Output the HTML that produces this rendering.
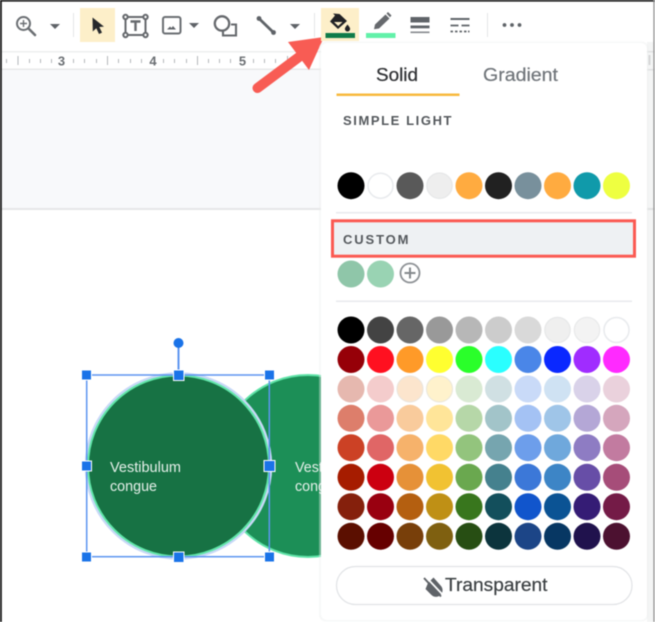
<!DOCTYPE html>
<html><head><meta charset="utf-8">
<style>
html,body{margin:0;padding:0;background:#fff}
svg{display:block;filter:blur(0.5px)}
text{font-family:"Liberation Sans",Arial,sans-serif}
</style></head>
<body>
<svg width="655" height="622" viewBox="0 0 655 622" xmlns="http://www.w3.org/2000/svg">
<rect width="655" height="622" fill="#fff"/>
<!-- canvas -->
<rect x="0" y="70" width="655" height="138" fill="#f8f9fb"/>
<rect x="0" y="208" width="655" height="2" fill="#e6e7e8"/>
<rect x="0" y="51" width="655" height="1.5" fill="#eeefef"/>
<rect x="0" y="68.5" width="655" height="1.5" fill="#e8e9ea"/>
<!-- ruler -->
<g fill="#b4b7ba">
<rect x="17.5" y="56" width="1" height="9"/><rect x="107" y="56" width="1" height="9"/><rect x="197" y="56" width="1" height="9"/><rect x="287" y="56" width="1" height="9"/>
<rect x="6" y="59" width="1" height="4"/><rect x="29" y="59" width="1" height="4"/><rect x="40" y="59" width="1" height="4"/><rect x="51" y="59" width="1" height="4"/>
<rect x="73" y="59" width="1" height="4"/><rect x="84" y="59" width="1" height="4"/><rect x="96" y="59" width="1" height="4"/>
<rect x="118" y="59" width="1" height="4"/><rect x="130" y="59" width="1" height="4"/><rect x="141" y="59" width="1" height="4"/>
<rect x="163" y="59" width="1" height="4"/><rect x="174" y="59" width="1" height="4"/><rect x="186" y="59" width="1" height="4"/>
<rect x="208" y="59" width="1" height="4"/><rect x="219" y="59" width="1" height="4"/><rect x="230" y="59" width="1" height="4"/>
<rect x="253" y="59" width="1" height="4"/><rect x="264" y="59" width="1" height="4"/><rect x="275" y="59" width="1" height="4"/>
</g>
<g font-size="13" fill="#6b6f73" text-anchor="middle" font-weight="bold">
<text x="61.5" y="65.5">3</text><text x="153" y="65.5">4</text><text x="242.5" y="65.5">5</text>
</g>
<!-- toolbar -->
<g fill="none" stroke="#6b6f73" stroke-width="2">
<circle cx="23.5" cy="23.5" r="6.5"/>
<path d="M28.5 28.5L35 35" stroke-width="2.6" stroke-linecap="round"/>
<path d="M20 23.5h7M23.5 20v7" stroke-width="1.4"/>
</g>
<path d="M50 24h10l-5 5z" fill="#5f6368"/>
<rect x="73" y="13" width="1" height="24" fill="#e3e5e7"/>
<rect x="80" y="8" width="35" height="34" fill="#fdefc9"/>
<path d="M92.5 17.5L92.8 31.5L96.3 28.2L99 34L102 32.6L99.3 27L104 26.6Z" fill="#26282b"/>
<!-- text box -->
<g fill="none" stroke="#66696d" stroke-width="2">
<rect x="125.5" y="17" width="20" height="18"/>
<circle cx="125.5" cy="17" r="2.2" fill="#fff"/><circle cx="145.5" cy="17" r="2.2" fill="#fff"/>
<circle cx="125.5" cy="35" r="2.2" fill="#fff"/><circle cx="145.5" cy="35" r="2.2" fill="#fff"/>
<path d="M130.5 21.5h10M135.5 21.5v9.5" stroke-width="2.4"/>
</g>
<!-- image -->
<rect x="163" y="17" width="17.5" height="16.5" rx="2" fill="none" stroke="#6b6f73" stroke-width="2"/>
<path d="M167 29.5l3-3 1.5 1.5 1.5-2 3 3.5z" fill="#5f6368"/>
<path d="M189 23h10l-5 5z" fill="#5f6368"/>
<!-- shape -->
<circle cx="222" cy="23.5" r="7.2" fill="none" stroke="#66696d" stroke-width="2.3"/>
<path d="M231 24.5h5v11h-13v-4" fill="none" stroke="#66696d" stroke-width="2.1"/>
<!-- line -->
<path d="M259 18.5L273.5 32.5" stroke="#5f6368" stroke-width="2.8"/>
<circle cx="259" cy="18.5" r="2.4" fill="#5f6368"/><circle cx="273.5" cy="32.5" r="2.4" fill="#5f6368"/>
<path d="M290 24h10l-5 5z" fill="#5f6368"/>
<rect x="314" y="13" width="1" height="24" fill="#e3e5e7"/>
<!-- arrow -->
<path d="M257.5 88L303 54" stroke="#f85c54" stroke-width="10" stroke-linecap="round" fill="none"/>
<path d="M288 42L324 37L309 70Z" fill="#f85c54"/>
<!-- fill highlight -->
<rect x="321" y="8" width="38" height="33" fill="#fdefc9"/>
<path d="M333 13.5L335 15.5L330 21.5L338 29L347 21L339.5 14Z" fill="#202124"/>
<path d="M334 22L342.5 22L338.2 26Z" fill="#fdefc9"/>
<path d="M347.5 24.5c1.6 2 2.6 3.2 2.6 4.4a2.6 2.6 0 0 1-5.2 0c0-1.2 1-2.4 2.6-4.4z" fill="#202124"/>
<rect x="325.5" y="33" width="29.5" height="5" fill="#0f7b49"/>
<!-- pencil -->
<path d="M374 29.2L375 24.5L385.5 14.5L389.5 18.5L379 28.5Z" fill="#66696d"/>
<path d="M386.5 13.5L388 12L391.5 15.5L390 17.2Z" fill="#66696d"/>
<rect x="366" y="33" width="29.5" height="5" fill="#62f1a9"/>
<!-- border weight -->
<rect x="410.5" y="17" width="19" height="5.5" fill="#5f6368"/>
<rect x="410.5" y="25.5" width="19" height="2.8" fill="#5f6368"/>
<rect x="410.5" y="31.5" width="19" height="1.6" fill="#85898d"/>
<!-- border dash -->
<rect x="450.5" y="18" width="19" height="2" fill="#5f6368"/>
<path d="M450.5 25.5h8M461.5 25.5h8" stroke="#5f6368" stroke-width="1.8"/>
<path d="M450.5 31.5h2.5M455 31.5h2.5M459.5 31.5h2.5M464 31.5h2.5M468 31.5h1.5" stroke="#5f6368" stroke-width="1.8"/>
<rect x="487" y="13" width="1" height="24" fill="#e3e5e7"/>
<circle cx="504.5" cy="25" r="1.9" fill="#5f6368"/><circle cx="512" cy="25" r="1.9" fill="#5f6368"/><circle cx="519.5" cy="25" r="1.9" fill="#5f6368"/>
<!-- shapes -->
<circle cx="308" cy="466" r="91" fill="#1c8f57" stroke="#60e3a8" stroke-width="2"/>
<text x="295" y="472" font-size="14.3" fill="#e6f0ea">Vest</text>
<text x="295" y="491" font-size="14.3" fill="#e6f0ea">congue</text>
<circle cx="178.5" cy="466" r="92.5" fill="none" stroke="#c8d8f7" stroke-width="2.5"/>
<circle cx="178.5" cy="466" r="90.5" fill="#177244" stroke="#62e6aa" stroke-width="2"/>
<text x="110" y="472" font-size="14.3" fill="#e6f0ea" textLength="71" lengthAdjust="spacingAndGlyphs">Vestibulum</text>
<text x="110" y="491" font-size="14.3" fill="#e6f0ea" textLength="47" lengthAdjust="spacingAndGlyphs">congue</text>
<rect x="86.7" y="375" width="182.6" height="181.7" fill="none" stroke="#5d95f0" stroke-width="1.5"/>
<path d="M178.5 343V375" stroke="#5d95f0" stroke-width="2"/>
<circle cx="178.5" cy="343" r="5" fill="#1a73e8"/>
<g fill="#1a73e8" stroke="#fff" stroke-width="1">
<rect x="81.5" y="370" width="10" height="10"/><rect x="173.5" y="370" width="10.5" height="10.5"/><rect x="264.5" y="370" width="10" height="10"/>
<rect x="81.5" y="461" width="10" height="10"/><rect x="264" y="460.5" width="11" height="11"/>
<rect x="81.5" y="552" width="10" height="10"/><rect x="173.5" y="552" width="10.5" height="10.5"/><rect x="264.5" y="552" width="10" height="10"/>
</g>
<!-- right gutter -->
<rect x="647" y="42" width="7" height="580" fill="#f4f5f5"/>
<rect x="647" y="51" width="7" height="1.5" fill="#e0e1e2"/>
<rect x="647" y="69" width="7" height="1.5" fill="#e0e1e2"/>
<rect x="648.5" y="55" width="2" height="10" fill="#d5d6d7"/>
<rect x="647" y="208" width="7" height="2" fill="#e0e1e2"/>
<!-- popup -->
<rect x="319" y="41.5" width="329.5" height="580" rx="7" fill="#eceded" opacity=".4"/>
<rect x="321" y="43" width="326" height="577" rx="6" fill="#fff"/>
<text x="376" y="81" font-size="18.5" fill="#303235" stroke="#303235" stroke-width=".25" textLength="42" lengthAdjust="spacingAndGlyphs">Solid</text>
<text x="483" y="81" font-size="18.5" fill="#70757a" stroke="#70757a" stroke-width=".2" textLength="75" lengthAdjust="spacingAndGlyphs">Gradient</text>
<rect x="336.5" y="93.5" width="123" height="2.5" fill="#f7b93e"/>
<text x="343" y="125" font-size="13" font-weight="bold" fill="#55595d" textLength="108.5">SIMPLE LIGHT</text>
<!-- theme row -->
<g>
<circle cx="351" cy="185.7" r="13.5" fill="#000"/>
<circle cx="380.5" cy="185.7" r="12.5" fill="#fff" stroke="#e8eaed" stroke-width="1.5"/>
<circle cx="410" cy="185.7" r="13.5" fill="#595959"/>
<circle cx="439.5" cy="185.7" r="12.7" fill="#eeeeee" stroke="#e6e7e8" stroke-width="1.2"/>
<circle cx="469" cy="185.7" r="13.5" fill="#ffab40"/>
<circle cx="498.5" cy="185.7" r="13.5" fill="#212121"/>
<circle cx="528" cy="185.7" r="13.5" fill="#78909c"/>
<circle cx="557.5" cy="185.7" r="13.5" fill="#ffab40"/>
<circle cx="587" cy="185.7" r="13.5" fill="#109aaa"/>
<circle cx="616.5" cy="185.7" r="13.5" fill="#eeff41"/>
</g>
<rect x="336" y="212" width="296" height="1.5" fill="#e8eaed"/>
<!-- custom -->
<rect x="332.5" y="220.8" width="302" height="35.4" fill="#eef1f3" stroke="#fb5a52" stroke-width="3"/>
<text x="343" y="244" font-size="13" font-weight="bold" fill="#55595d" textLength="65.5">CUSTOM</text>
<circle cx="351" cy="274" r="13.5" fill="#8fc6a9"/>
<circle cx="380.5" cy="274" r="13.5" fill="#99d3b3"/>
<circle cx="410" cy="273" r="9.5" fill="none" stroke="#8d9195" stroke-width="1.8"/>
<path d="M404.5 273h11M410 267.5v11" stroke="#85898d" stroke-width="2"/>
<rect x="336" y="300.5" width="296" height="1.5" fill="#e8eaed"/>
<!-- palette -->
<g>
<circle cx="351" cy="330" r="13.5" fill="#000"/><circle cx="380.5" cy="330" r="13.5" fill="#434343"/><circle cx="410" cy="330" r="13.5" fill="#666"/><circle cx="439.5" cy="330" r="13.5" fill="#999"/><circle cx="469" cy="330" r="13.5" fill="#b7b7b7"/><circle cx="498.5" cy="330" r="13.5" fill="#ccc"/><circle cx="528" cy="330" r="13.5" fill="#d9d9d9"/><circle cx="557.5" cy="330" r="12.7" fill="#efefef" stroke="#e6e7e8" stroke-width="1.2"/><circle cx="587" cy="330" r="12.7" fill="#f3f3f3" stroke="#e8e9ea" stroke-width="1.2"/><circle cx="616.5" cy="330" r="12.5" fill="#fff" stroke="#e8eaed" stroke-width="1.5"/>
<circle cx="351" cy="359.5" r="13.5" fill="#960008"/><circle cx="380.5" cy="359.5" r="13.5" fill="#ff1020"/><circle cx="410" cy="359.5" r="13.5" fill="#ff9a28"/><circle cx="439.5" cy="359.5" r="13.5" fill="#ffff30"/><circle cx="469" cy="359.5" r="13.5" fill="#2aff2a"/><circle cx="498.5" cy="359.5" r="13.5" fill="#2affff"/><circle cx="528" cy="359.5" r="13.5" fill="#4a86e8"/><circle cx="557.5" cy="359.5" r="13.5" fill="#0a28ff"/><circle cx="587" cy="359.5" r="13.5" fill="#a02cff"/><circle cx="616.5" cy="359.5" r="13.5" fill="#ff2aff"/>
<circle cx="351" cy="389" r="13.5" fill="#e6b8af"/><circle cx="380.5" cy="389" r="13.5" fill="#f4cccc"/><circle cx="410" cy="389" r="13" fill="#fce5cd" stroke="#e9e4dd" stroke-width="1"/><circle cx="439.5" cy="389" r="13" fill="#fff2cc" stroke="#e9e6da" stroke-width="1"/><circle cx="469" cy="389" r="13.5" fill="#d9ead3"/><circle cx="498.5" cy="389" r="13.5" fill="#d0e0e3"/><circle cx="528" cy="389" r="13.5" fill="#c9daf8"/><circle cx="557.5" cy="389" r="13.5" fill="#cfe2f3"/><circle cx="587" cy="389" r="13.5" fill="#d9d2e9"/><circle cx="616.5" cy="389" r="13.5" fill="#ead1dc"/>
<circle cx="351" cy="418.3" r="13.5" fill="#dd7e6b"/><circle cx="380.5" cy="418.3" r="13.5" fill="#ea9999"/><circle cx="410" cy="418.3" r="13.5" fill="#f9cb9c"/><circle cx="439.5" cy="418.3" r="13.5" fill="#ffe599"/><circle cx="469" cy="418.3" r="13.5" fill="#b6d7a8"/><circle cx="498.5" cy="418.3" r="13.5" fill="#a2c4c9"/><circle cx="528" cy="418.3" r="13.5" fill="#a4c2f4"/><circle cx="557.5" cy="418.3" r="13.5" fill="#9fc5e8"/><circle cx="587" cy="418.3" r="13.5" fill="#b4a7d6"/><circle cx="616.5" cy="418.3" r="13.5" fill="#d5a6bd"/>
<circle cx="351" cy="447.7" r="13.5" fill="#cc4125"/><circle cx="380.5" cy="447.7" r="13.5" fill="#e06666"/><circle cx="410" cy="447.7" r="13.5" fill="#f6b26b"/><circle cx="439.5" cy="447.7" r="13.5" fill="#ffd966"/><circle cx="469" cy="447.7" r="13.5" fill="#93c47d"/><circle cx="498.5" cy="447.7" r="13.5" fill="#76a5af"/><circle cx="528" cy="447.7" r="13.5" fill="#6d9eeb"/><circle cx="557.5" cy="447.7" r="13.5" fill="#6fa8dc"/><circle cx="587" cy="447.7" r="13.5" fill="#8e7cc3"/><circle cx="616.5" cy="447.7" r="13.5" fill="#c27ba0"/>
<circle cx="351" cy="477.3" r="13.5" fill="#a61c00"/><circle cx="380.5" cy="477.3" r="13.5" fill="#cc0010"/><circle cx="410" cy="477.3" r="13.5" fill="#e69138"/><circle cx="439.5" cy="477.3" r="13.5" fill="#f1c232"/><circle cx="469" cy="477.3" r="13.5" fill="#6aa84f"/><circle cx="498.5" cy="477.3" r="13.5" fill="#45818e"/><circle cx="528" cy="477.3" r="13.5" fill="#3c78d8"/><circle cx="557.5" cy="477.3" r="13.5" fill="#3d85c6"/><circle cx="587" cy="477.3" r="13.5" fill="#674ea7"/><circle cx="616.5" cy="477.3" r="13.5" fill="#a64d79"/>
<circle cx="351" cy="506.7" r="13.5" fill="#85200c"/><circle cx="380.5" cy="506.7" r="13.5" fill="#990010"/><circle cx="410" cy="506.7" r="13.5" fill="#b45f10"/><circle cx="439.5" cy="506.7" r="13.5" fill="#bf9015"/><circle cx="469" cy="506.7" r="13.5" fill="#38761d"/><circle cx="498.5" cy="506.7" r="13.5" fill="#134f5c"/><circle cx="528" cy="506.7" r="13.5" fill="#1155cc"/><circle cx="557.5" cy="506.7" r="13.5" fill="#0b5394"/><circle cx="587" cy="506.7" r="13.5" fill="#351c75"/><circle cx="616.5" cy="506.7" r="13.5" fill="#741b47"/>
<circle cx="351" cy="536.3" r="13.5" fill="#5b0f00"/><circle cx="380.5" cy="536.3" r="13.5" fill="#660000"/><circle cx="410" cy="536.3" r="13.5" fill="#783f0a"/><circle cx="439.5" cy="536.3" r="13.5" fill="#7f6010"/><circle cx="469" cy="536.3" r="13.5" fill="#274e13"/><circle cx="498.5" cy="536.3" r="13.5" fill="#0c343d"/><circle cx="528" cy="536.3" r="13.5" fill="#1c4587"/><circle cx="557.5" cy="536.3" r="13.5" fill="#073763"/><circle cx="587" cy="536.3" r="13.5" fill="#20124d"/><circle cx="616.5" cy="536.3" r="13.5" fill="#4c1130"/>
</g>
<!-- transparent button -->
<rect x="336.5" y="566.5" width="295.5" height="38" rx="19" fill="#fff" stroke="#e1e3e6" stroke-width="1.2"/>
<path d="M428 583L433.5 577.500L441 586A6.300 6.300 0 0 1 431 594.500L425.500 589Z" fill="#5f6368"/>
<path d="M425.500 576.500L442.500 594.500" stroke="#fff" stroke-width="1.800"/>
<path d="M424 578L441 596.500" stroke="#5f6368" stroke-width="1.900"/>
<text x="445" y="591" font-size="18" fill="#3c4043" stroke="#3c4043" stroke-width=".2" textLength="102.5" lengthAdjust="spacingAndGlyphs">Transparent</text>
<!-- screenshot frame -->
<rect x="0" y="0" width="655" height="1.6" fill="#111"/>
<rect x="0" y="0" width="1.8" height="622" fill="#111"/>
<rect x="653.4" y="0" width="1.2" height="622" fill="#8a8a8a"/>
</svg>
</body></html>
